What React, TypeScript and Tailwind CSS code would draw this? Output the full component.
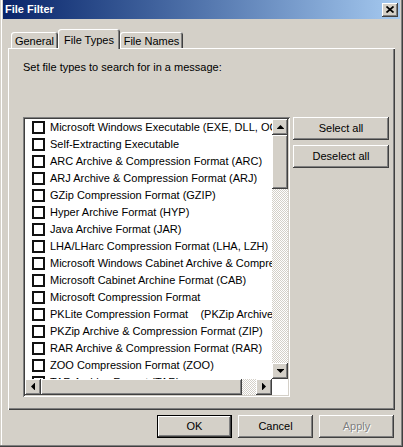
import React from "react";

const raised =
  "shadow-[inset_-1px_-1px_#404040,inset_1px_1px_#ffffff,inset_-2px_-2px_#808080,inset_2px_2px_#d4d0c8]";
const sunken =
  "shadow-[inset_1px_1px_#808080,inset_-1px_-1px_#ffffff,inset_2px_2px_#404040,inset_-2px_-2px_#d4d0c8]";
const hatch =
  "bg-[image:repeating-conic-gradient(#d4d0c8_0_25%,#ffffff_0_50%)] bg-[length:2px_2px]";

const fileTypes = [
  "Microsoft Windows Executable (EXE, DLL, OCX)",
  "Self-Extracting Executable",
  "ARC Archive & Compression Format (ARC)",
  "ARJ Archive & Compression Format (ARJ)",
  "GZip Compression Format (GZIP)",
  "Hyper Archive Format (HYP)",
  "Java Archive Format (JAR)",
  "LHA/LHarc Compression Format (LHA, LZH)",
  "Microsoft Windows Cabinet Archive & Compression Format",
  "Microsoft Cabinet Archine Format (CAB)",
  "Microsoft Compression Format",
  "PKLite Compression Format    (PKZip Archive & Compression Format)",
  "PKZip Archive & Compression Format (ZIP)",
  "RAR Archive & Compression Format (RAR)",
  "ZOO Compression Format (ZOO)",
  "TAR Archive Format (TAR)",
];

type Dir = "up" | "down" | "left" | "right";

const arrowPoints: Record<Dir, string> = {
  up: "3.5,0 7.5,4 -0.5,4",
  down: "-0.5,0 7.5,0 3.5,4",
  left: "4,-0.5 4,7.5 0,3.5",
  right: "0,-0.5 0,7.5 4,3.5",
};

function ScrollArrow({ dir }: { dir: Dir }) {
  const vertical = dir === "up" || dir === "down";
  return (
    <div className={`flex h-[16px] w-[16px] shrink-0 items-center justify-center bg-[#d4d0c8] ${raised}`}>
      <svg
        width={vertical ? 7 : 4}
        height={vertical ? 4 : 7}
        viewBox={vertical ? "0 0 7 4" : "0 0 4 7"}
        className="-mt-[1px]"
      >
        <polygon points={arrowPoints[dir]} fill="#000" />
      </svg>
    </div>
  );
}

function Button({
  label,
  isDefault,
  disabled,
  className = "",
}: {
  label: string;
  isDefault?: boolean;
  disabled?: boolean;
  className?: string;
}) {
  return (
    <button
      type="button"
      className={`flex h-[23px] items-center justify-center bg-[#d4d0c8] text-[11px] ${raised} ${
        isDefault ? "border border-black" : ""
      } ${disabled ? "text-[#808080] [text-shadow:1px_1px_#ffffff]" : "text-black"} ${className}`}
    >
      {label}
    </button>
  );
}

function Tab({ label, width, selected }: { label: string; width: string; selected?: boolean }) {
  return (
    <div
      className={`flex items-start justify-center rounded-t-[3px] bg-[#d4d0c8] text-[11px] text-black shadow-[inset_1px_1px_#ffffff,inset_-1px_0_#404040,inset_-2px_0_#808080] ${width} ${
        selected ? "relative top-[1px] z-10 h-[20px] pt-[3px]" : "h-[16px] pt-[1px]"
      }`}
    >
      {label}
    </div>
  );
}

export default function App() {
  return (
    <div className="flex h-[447px] w-[403px] flex-col bg-[#d4d0c8] px-[3px] pb-[3px] font-['Tahoma','Liberation_Sans',sans-serif] shadow-[inset_-1px_-1px_#404040,inset_-2px_-2px_#808080,inset_1px_0_#d4d0c8,inset_2px_0_#ffffff]">
      {/* title bar */}
      <div className="flex h-[19px] items-center justify-between bg-gradient-to-r from-[#0a246a] to-[#a6caf0] pl-[2px] pr-[2px]">
        <span className="text-[11px] font-bold text-white">File Filter</span>
        <div className={`flex h-[14px] w-[16px] items-center justify-center bg-[#d4d0c8] ${raised}`}>
          <svg width="8" height="7" viewBox="0 0 8 7" className="-mt-[1px]">
            <path d="M0.5 0.5 L7.5 6.5 M7.5 0.5 L0.5 6.5" stroke="#000" strokeWidth="1.7" />
          </svg>
        </div>
      </div>

      <div className="flex flex-1 flex-col px-[5px]">
        {/* tabs */}
        <div className="mt-[10px] flex h-[19px] items-end pl-[3px]">
          <Tab label="General" width="w-[47px]" />
          <Tab label="File Types" width="w-[62px]" selected />
          <Tab label="File Names" width="w-[63px]" />
        </div>

        {/* tab page */}
        <div className="flex h-[362px] flex-col pl-[15px] pt-[13px] shadow-[inset_1px_1px_#ffffff,inset_-1px_-1px_#404040,inset_-2px_-2px_#808080]">
          <p className="h-[13px] text-[11px] leading-[13px] text-black">
            Set file types to search for in a message:
          </p>

          <div className="mt-[43px] flex">
            {/* list box */}
            <div className={`h-[280px] w-[267px] bg-white p-[2px] ${sunken}`}>
              <div className="flex h-full flex-col">
                <div className="flex min-h-0 flex-1">
                  <div className="min-w-0 flex-1 overflow-hidden">
                    {fileTypes.map((t) => (
                      <div key={t} className="flex h-[17px] items-center pl-[7px]">
                        <span className="h-[13px] w-[13px] shrink-0 border-2 border-[#111] bg-white" />
                        <span className="ml-[5px] whitespace-pre text-[11px] text-black">{t}</span>
                      </div>
                    ))}
                  </div>
                  <div className="flex w-[16px] flex-col">
                    <ScrollArrow dir="up" />
                    <div className={`h-[54px] bg-[#d4d0c8] ${raised}`} />
                    <div className={`flex-1 ${hatch}`} />
                    <ScrollArrow dir="down" />
                  </div>
                </div>
                <div className="flex h-[16px]">
                  <ScrollArrow dir="left" />
                  <div className={`w-[201px] bg-[#d4d0c8] ${raised}`} />
                  <div className={`flex-1 ${hatch}`} />
                  <ScrollArrow dir="right" />
                  <div className="w-[16px] bg-white" />
                </div>
              </div>
            </div>

            {/* side buttons */}
            <div className="ml-[3px] flex w-[96px] flex-col gap-[5px]">
              <Button label="Select all" />
              <Button label="Deselect all" />
            </div>
          </div>
        </div>

        {/* dialog buttons */}
        <div className="mt-[5px] flex justify-end gap-[6px] pr-[1px]">
          <Button label="OK" isDefault className="w-[75px]" />
          <Button label="Cancel" className="w-[75px]" />
          <Button label="Apply" disabled className="w-[75px]" />
        </div>
      </div>
    </div>
  );
}
